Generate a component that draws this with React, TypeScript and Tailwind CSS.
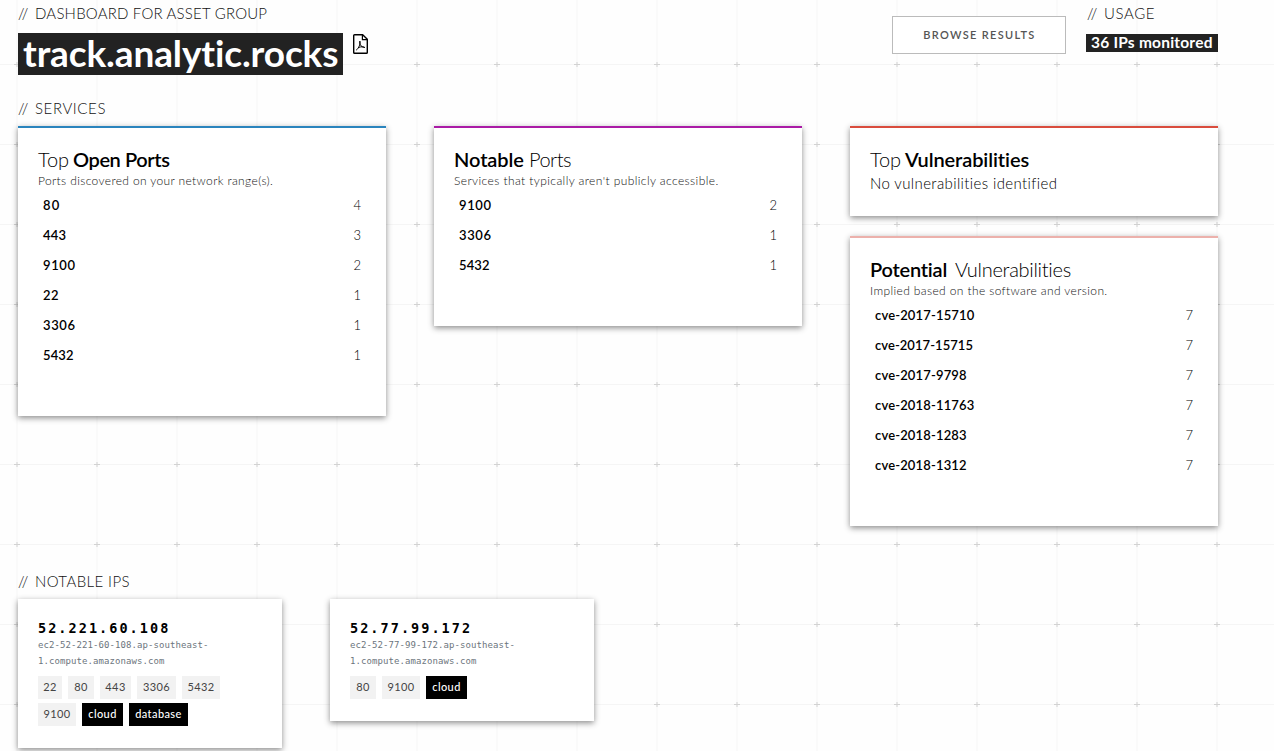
import type { ReactNode } from 'react';

type Entry = { label: string; value: number; tracking?: string };
type Chip = { label: string; width: string; dark?: boolean };

const openPorts: Entry[] = [
  { label: '80', value: 4, tracking: 'tracking-[1.2px]' },
  { label: '443', value: 3, tracking: 'tracking-[0.2px]' },
  { label: '9100', value: 2, tracking: 'tracking-[0.6px]' },
  { label: '22', value: 1, tracking: 'tracking-[0.4px]' },
  { label: '3306', value: 1, tracking: 'tracking-[0.6px]' },
  { label: '5432', value: 1, tracking: 'tracking-[0.1px]' },
];

const notablePorts: Entry[] = [
  { label: '9100', value: 2, tracking: 'tracking-[0.6px]' },
  { label: '3306', value: 1, tracking: 'tracking-[0.6px]' },
  { label: '5432', value: 1, tracking: 'tracking-[0.1px]' },
];

const potential: Entry[] = [
  { label: 'cve-2017-15710', value: 7 },
  { label: 'cve-2017-15715', value: 7, tracking: 'tracking-[0.05px]' },
  { label: 'cve-2017-9798', value: 7 },
  { label: 'cve-2018-11763', value: 7 },
  { label: 'cve-2018-1283', value: 7 },
  { label: 'cve-2018-1312', value: 7 },
];

const hosts: { ip: string; name: string[]; chips: Chip[] }[] = [
  {
    ip: '52.221.60.108',
    name: ['ec2-52-221-60-108.ap-southeast-', '1.compute.amazonaws.com'],
    chips: [
      { label: '22', width: 'w-6' },
      { label: '80', width: 'w-[26px]' },
      { label: '443', width: 'w-[31px]' },
      { label: '3306', width: 'w-[39px]' },
      { label: '5432', width: 'w-[38px]' },
      { label: '9100', width: 'w-[38px]' },
      { label: 'cloud', width: 'w-[41px]', dark: true },
      { label: 'database', width: 'w-[59px]', dark: true },
    ],
  },
  {
    ip: '52.77.99.172',
    name: ['ec2-52-77-99-172.ap-southeast-', '1.compute.amazonaws.com'],
    chips: [
      { label: '80', width: 'w-[26px]' },
      { label: '9100', width: 'w-[38px]' },
      { label: 'cloud', width: 'w-[41px]', dark: true },
    ],
  },
];

function GridBackground() {
  return (
    <svg className="absolute inset-0 h-full w-full" aria-hidden="true">
      <defs>
        <pattern id="grid" x="-23" y="24" width="80" height="80" patternUnits="userSpaceOnUse">
          <rect x="39" y="0" width="2" height="80" fill="#fafafa" />
          <rect x="0" y="40" width="80" height="1" fill="#f5f5f5" />
          <rect x="39" y="38" width="2" height="5" fill="#e6e6e6" />
          <rect x="37" y="40" width="6" height="1" fill="#d2d2d2" />
        </pattern>
      </defs>
      <rect width="100%" height="100%" fill="url(#grid)" />
    </svg>
  );
}

function PdfIcon() {
  return (
    <svg
      className="mt-px ml-[10px] h-5 w-[15px]"
      viewBox="0 0 15 20"
      fill="none"
      stroke="#000"
      strokeWidth="1.4"
      strokeLinejoin="round"
      aria-hidden="true"
    >
      <path d="M1.6 .7H9.7L14.3 5.3V18.4Q14.3 19.3 13.4 19.3H1.6Q.7 19.3 .7 18.4V1.6Q.7 .7 1.6 .7Z" />
      <path d="M9.4 1V5.7H14" strokeWidth="1.2" />
      <path
        d="M3.2 16.1C4.6 15.4 5.8 13.3 6.6 11.1C7.1 9.7 7.3 8.2 6.9 7.1C6.4 8 6.7 9.6 7.4 10.9C8.2 12.3 9.8 13.6 11.8 13.5C11 12.4 8.3 12.6 5.3 13.5"
        strokeWidth="1"
      />
    </svg>
  );
}

function SectionLabel({ children, tracking }: { children: ReactNode; tracking: string }) {
  return (
    <h2 className={`flex text-[15px] leading-5 font-light whitespace-nowrap text-[#111] ${tracking}`}>
      <span className="w-[17px] tracking-[0.3px]">//</span>
      {children}
    </h2>
  );
}

function Card({ accent, className = '', children }: { accent: string; className?: string; children: ReactNode }) {
  return (
    <section
      className={`w-[368px] border-t-2 bg-white px-5 pt-[19px] shadow-[0_2px_6px_rgba(0,0,0,0.45)] ${accent} ${className}`}
    >
      {children}
    </section>
  );
}

function CardTitle({ children }: { children: ReactNode }) {
  return <h3 className="flex text-xl leading-6 font-light whitespace-nowrap text-black">{children}</h3>;
}

function CardNote({ children, tracking }: { children: ReactNode; tracking: string }) {
  return <p className={`text-xs leading-[19px] font-light whitespace-nowrap text-[#111] ${tracking}`}>{children}</p>;
}

function EntryList({ entries }: { entries: Entry[] }) {
  return (
    <ul className="pr-[5px] pl-[5px]">
      {entries.map((e) => (
        <li key={e.label} className="flex h-[30px] items-center justify-between text-[13px] leading-[30px]">
          <span className={`font-semibold text-black ${e.tracking ?? 'tracking-[0.15px]'}`}>{e.label}</span>
          <span className="font-light text-black">{e.value}</span>
        </li>
      ))}
    </ul>
  );
}

function HostCard({ ip, name, chips }: { ip: string; name: string[]; chips: Chip[] }) {
  return (
    <section className="w-[264px] bg-white px-5 pt-5 pb-[22px] shadow-[0_2px_6px_rgba(0,0,0,0.45)]">
      <h3 className="font-['DejaVu_Sans_Mono',monospace] text-[13.5px] leading-[18px] font-bold tracking-[2.05px] text-black">
        {ip}
      </h3>
      <p className="font-['DejaVu_Sans_Mono',monospace] text-[9px] leading-4 tracking-[0.08px] text-[#6c757d]">
        {name[0]}
        <br />
        {name[1]}
      </p>
      <div className="mt-[7px] flex w-[200px] flex-wrap gap-x-1.5 gap-y-1">
        {chips.map((c) => (
          <span
            key={c.label}
            className={`h-[23px] text-center text-[11px] leading-[21px] tracking-[0.4px] ${c.width} ${
              c.dark ? 'bg-black font-medium text-white' : 'bg-[#f2f2f2] text-[#444]'
            }`}
          >
            {c.label}
          </span>
        ))}
      </div>
    </section>
  );
}

export default function App() {
  return (
    <div className="relative h-[751px] w-full overflow-hidden bg-[#fefefe] font-[Lato,sans-serif]">
      <GridBackground />
      <main className="relative w-[1218px] pt-[3px] pl-[18px]">
        <header className="flex h-[95px] items-start">
          <div className="flex-1">
            <SectionLabel tracking="tracking-[0.2px]">DASHBOARD FOR ASSET GROUP</SectionLabel>
            <div className="mt-[10px] flex items-start">
              <h1 className="h-[42px] w-[325px] bg-[#222] pl-[5px] text-[37px] leading-10 font-bold tracking-[-0.12px] whitespace-nowrap text-white">
                track.analytic.rocks
              </h1>
              <PdfIcon />
            </div>
          </div>
          <button className="mt-[13px] h-[38px] w-[174px] border border-[#bbb] bg-white pl-px text-[11px] font-semibold tracking-[1.31px] text-[#555]">
            BROWSE RESULTS
          </button>
          <div className="ml-5 w-[132px]">
            <div className="pl-px">
              <SectionLabel tracking="tracking-[0.6px]">USAGE</SectionLabel>
            </div>
            <div className="mt-[11px] h-[18px] bg-[#222] pl-[5px] text-[15.5px] leading-[17px] font-bold tracking-[0.22px] whitespace-nowrap text-white">
              36 IPs monitored
            </div>
          </div>
        </header>

        <SectionLabel tracking="tracking-[0.6px]">SERVICES</SectionLabel>
        <div className="mt-2 flex h-[445px] items-start gap-12">
          <Card accent="border-[#2a84bd]" className="pb-[46px]">
            <CardTitle>
              <span className="w-[35px] tracking-[-0.14px]">Top</span>
              <span className="font-semibold tracking-[-0.4px]">Open Ports</span>
            </CardTitle>
            <CardNote tracking="tracking-[0.37px]">Ports discovered on your network range(s).</CardNote>
            <EntryList entries={openPorts} />
          </Card>

          <Card accent="border-[#aa1ba6]" className="pb-[46px]">
            <CardTitle>
              <span className="w-[75px] font-semibold tracking-[-0.07px]">Notable</span>
              <span className="tracking-[-0.5px]">Ports</span>
            </CardTitle>
            <CardNote tracking="tracking-[0.41px]">Services that typically aren't publicly accessible.</CardNote>
            <EntryList entries={notablePorts} />
          </Card>

          <div className="flex flex-col gap-5">
            <Card accent="border-[#d94c3d]" className="pb-[23px]">
              <CardTitle>
                <span className="w-[35px] tracking-[-0.14px]">Top</span>
                <span className="font-semibold tracking-[-0.1px]">Vulnerabilities</span>
              </CardTitle>
              <p className="mt-0.5 text-[15px] leading-5 font-light tracking-[0.38px] text-black">
                No vulnerabilities identified
              </p>
            </Card>

            <Card accent="border-[#ecb1ac]" className="pb-[46px]">
              <CardTitle>
                <span className="w-[85px] font-semibold tracking-[-0.22px]">Potential</span>
                <span className="tracking-[-0.28px]">Vulnerabilities</span>
              </CardTitle>
              <CardNote tracking="tracking-[0.38px]">Implied based on the software and version.</CardNote>
              <EntryList entries={potential} />
            </Card>
          </div>
        </div>

        <SectionLabel tracking="tracking-[0.4px]">NOTABLE IPS</SectionLabel>
        <div className="mt-2 flex items-start gap-12">
          {hosts.map((h) => (
            <HostCard key={h.ip} {...h} />
          ))}
        </div>
      </main>
    </div>
  );
}
